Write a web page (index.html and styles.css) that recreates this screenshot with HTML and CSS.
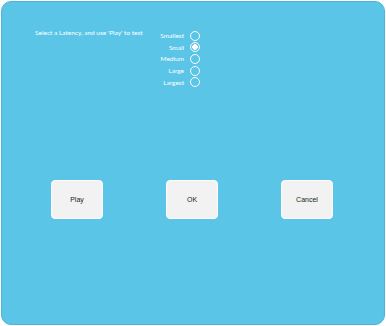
FILE: index.html
```html
<!DOCTYPE html>
<html lang="en">
<head>
  <meta charset="UTF-8">
  <title>Latency Test</title>
  <link rel="stylesheet" href="styles.css">
</head>
<body>
  <div class="panel">
    <div class="top">
      <p class="prompt">Select a Latency, and use 'Play' to test</p>
      <div class="radios">
        <label class="radio-row"><span>Smallest</span><span class="dot"></span></label>
        <label class="radio-row"><span>Small</span><span class="dot checked"></span></label>
        <label class="radio-row"><span>Medium</span><span class="dot"></span></label>
        <label class="radio-row"><span>Large</span><span class="dot"></span></label>
        <label class="radio-row"><span>Largest</span><span class="dot"></span></label>
      </div>
    </div>
    <div class="buttons">
      <button class="btn">Play</button>
      <button class="btn">OK</button>
      <button class="btn">Cancel</button>
    </div>
  </div>
</body>
</html>
```

FILE: styles.css
```css
body {
  margin: 0;
  background: #fff;
  font-family: Lato, "Liberation Sans", sans-serif;
}

.panel {
  box-sizing: border-box;
  width: 384px;
  height: 324px;
  margin: 1px;
  background: #5bc5e8;
  border: 1px solid #4fb4d8;
  border-radius: 10px;
}

.top {
  display: flex;
  padding: 28px 0 0 33px;
}

.prompt {
  width: 123px;
  margin: -1px 0 0;
  color: #fff;
  font-size: 6.5px;
  line-height: 8px;
}

.radios {
  display: flex;
  flex-direction: column;
}

.radio-row {
  display: flex;
  align-items: center;
  justify-content: flex-end;
  gap: 6px;
  width: 42px;
  height: 11.6px;
  color: #fff;
  font-size: 6.5px;
}

.dot {
  box-sizing: border-box;
  width: 10px;
  height: 10px;
  border: 1.5px solid #fff;
  border-radius: 50%;
  flex-shrink: 0;
}

.dot.checked {
  background: radial-gradient(circle, #fff 0 2.6px, transparent 3px);
}

.buttons {
  display: flex;
  justify-content: space-between;
  padding: 0 51px 0 49px;
  margin-top: 92px;
}

.btn {
  width: 52px;
  height: 39px;
  padding: 0;
  background: #f2f2f2;
  border: 1px solid #fff;
  border-radius: 4px;
  color: #222;
  font-family: "Liberation Sans", Arial, sans-serif;
  font-size: 7px;
}
```
